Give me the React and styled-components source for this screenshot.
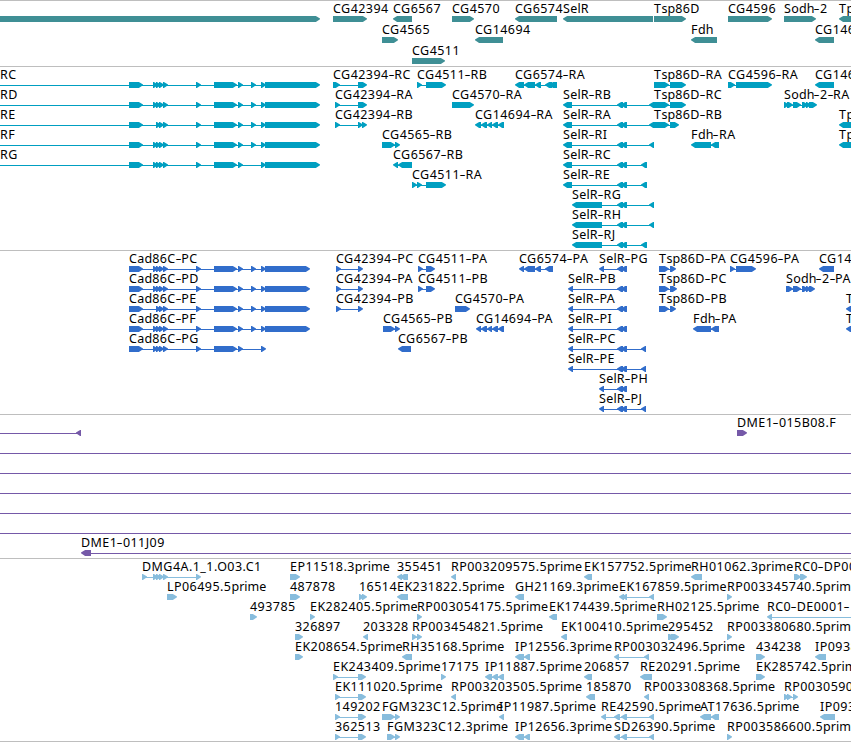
import React from "react";
import styled, { createGlobalStyle } from "styled-components";

const GlobalStyle = createGlobalStyle`
  body {
    margin: 0;
    background: #fff;
    overflow: hidden;
  }
`;

const Browser = styled.main`
  display: flex;
  flex-direction: column;
  width: 851px;
  height: 742px;
  overflow: hidden;
  background: #fff;
  color: #000;
  font-family: "Noto Sans", "DejaVu Sans", sans-serif;
  font-size: 12.5px;
`;

const Track = styled.section`
  display: flex;
  flex-direction: column;
  flex: none;
  box-sizing: border-box;
  height: ${(p) => p.$height}px;
  padding-top: 2px;
  border-top: 1px solid #bebebe;
  border-bottom: ${(p) => (p.$last ? "1px solid #bebebe" : "none")};
  color: ${(p) => p.$color};
`;

const Lane = styled.div`
  position: relative;
  flex: none;
  height: ${(p) => p.$pitch}px;
`;

/* Features sit at their own genomic coordinate within a lane. */
const FeatureBox = styled.div`
  position: absolute;
  top: 0;
  display: flex;
  flex-direction: column;
`;

const Label = styled.span`
  height: 13px;
  line-height: 11px;
  white-space: pre;
  color: #000;
`;

const Run = styled.span`
  letter-spacing: ${(p) => p.$spacing}px;
`;

const Hyphen = styled.span`
  display: inline-block;
  padding: 0 0.9px 0 0.6px;
  transform: scaleX(1.5);
`;

const Glyph = styled.svg`
  display: block;
  height: 6px;
  fill: currentColor;
  overflow: visible;
`;

const HEAD = 5;

function exonPath([a, b], dir, origin) {
  const s = a - origin;
  const e = b - origin;
  const head = Math.min(HEAD, e - s) - 0.9;
  return dir === "+"
    ? `M${s} 0H${e - head}L${e} 2.5V3.3L${e - head} 6H${s}Z`
    : `M${e} 0H${s + head}L${s} 2.5V3.3L${s + head} 6H${e}Z`;
}

/* Digits and capitals are set wider than lowercase. */
const runSpacing = (text) => (/^[a-z]/.test(text) ? 0.03 : 0.45);

const splitRuns = (label) => label.match(/[a-z]+|-|[^a-z-]+/g) ?? [];

function Feature({ label, dir, exons, from, to }) {
  const start = from ?? exons[0][0];
  const end = to ?? exons[exons.length - 1][1];
  return (
    <FeatureBox style={{ left: start }}>
      <Label>
        {splitRuns(label).map((run, i) =>
          run === "-" ? (
            <Hyphen key={i}>-</Hyphen>
          ) : (
            <Run key={i} $spacing={runSpacing(run)}>{run}</Run>
          )
        )}
      </Label>
      <Glyph width={end - start} height="6">
        {(exons.length !== 1 || from !== undefined || to !== undefined) && (
          <rect x={dir === "-" && from === undefined ? 3 : 0} y="3" width={end - start - 3} height="1" />
        )}
        {exons.map((x, i) => (
          <path key={i} d={exonPath(x, dir, start)} />
        ))}
      </Glyph>
    </FeatureBox>
  );
}

const f = (label, dir, spans, range = {}) => ({
  label,
  dir,
  exons: spans ? spans.split(" ").map((s) => s.split("-").map(Number)) : [],
  ...range,
});

const OFF_LEFT = { from: 0 };

const C_HEAD = "129-143 153-158 156-161 159-164 163-168";
const C_HEAD_E = "129-143 156-161 159-164 163-168";
const C_MID = "196-201 214-237 238-243 251-256 261-266";
const C_MID_G = "196-201 214-237 238-243 261-266";
const S_MID = "617-623 621-627";
const CG14694 = "481-487 487-492 492-498 498-504";

const genes = [
  [
    f("", "+", "0-320"),
    f("CG42394", "+", "333-367"),
    f("CG6567", "-", "393-412"),
    f("CG4570", "+", "452-474"),
    f("CG6574", "-", "515-557"),
    f("SelR", "-", "563-653"),
    f("Tsp86D", "+", "654-686"),
    f("CG4596", "+", "728-772"),
    f("Sodh-2", "+", "784-816"),
    f("Tp", "-", "839-860"),
  ],
  [
    f("CG4565", "+", "382-398"),
    f("CG14694", "-", "475-503"),
    f("Fdh", "-", "691-717"),
    f("CG146", "-", "815-834"),
  ],
  [f("CG4511", "+", "412-445")],
];

const transcripts = [
  [
    f("RC", "+", `${C_HEAD} ${C_MID} 265-320`, OFF_LEFT),
    f("CG42394-RC", "+", "333-340 358-367"),
    f("CG4511-RB", "+", "417-422 426-446"),
    f("CG6574-RA", "-", "515-524 524-535 535-541 545-552 549-557"),
    f("Tsp86D-RA", "+", "654-669 670-686"),
    f("CG4596-RA", "+", "728-735 736-772"),
    f("CG146", "-", "815-834"),
  ],
  [
    f("RD", "+", `${C_HEAD} ${C_MID} 265-320`, OFF_LEFT),
    f("CG42394-RA", "+", "335-340 358-367"),
    f("CG4570-RA", "+", "452-474"),
    f("SelR-RB", "-", `563-572 ${S_MID} 649-655`),
    f("Tsp86D-RC", "+", "654-669 670-686"),
    f("Sodh-2-RA", "+", "784-789 787-793 793-801 802-808 806-811 809-817"),
  ],
  [
    f("RE", "+", `${C_HEAD_E} ${C_MID} 265-320`, OFF_LEFT),
    f("CG42394-RB", "+", "335-340 358-363 362-367"),
    f("CG14694-RA", "-", `475-481 ${CG14694}`),
    f("SelR-RA", "-", `563-572 ${S_MID} 649-655`),
    f("Tsp86D-RB", "+", "654-669 670-679"),
    f("Tp", "-", "839-860"),
  ],
  [
    f("RF", "+", `${C_HEAD} ${C_MID} 265-320`, OFF_LEFT),
    f("CG4565-RB", "+", "382-395 395-400"),
    f("SelR-RI", "-", `563-572 ${S_MID} 649-654`),
    f("Fdh-RA", "-", "691-711 711-719"),
    f("Tp", "-", "839-860"),
  ],
  [
    f("RG", "+", `${C_HEAD} ${C_MID_G} 265-320`, OFF_LEFT),
    f("CG6567-RB", "-", "393-398 398-412"),
    f("SelR-RC", "-", `563-572 ${S_MID} 641-647`),
  ],
  [
    f("CG4511-RA", "+", "412-417 417-422 426-446"),
    f("SelR-RE", "-", `563-572 ${S_MID} 641-647`),
  ],
  [f("SelR-RG", "-", `572-602 ${S_MID} 649-654`)],
  [f("SelR-RH", "-", `572-602 ${S_MID} 649-654`)],
  [f("SelR-RJ", "-", `572-602 ${S_MID} 641-647`)],
];

const proteins = [
  [
    f("Cad86C-PC", "+", `${C_HEAD} ${C_MID} 265-310`),
    f("CG42394-PC", "+", "336-341 358-363"),
    f("CG4511-PA", "+", "418-423 426-435"),
    f("CG6574-PA", "-", "519-524 524-535 535-541 545-553"),
    f("SelR-PG", "-", `599-604 ${S_MID}`),
    f("Tsp86D-PA", "+", "659-669 670-676"),
    f("CG4596-PA", "+", "730-735 736-756"),
    f("CG14", "-", "819-834"),
  ],
  [
    f("Cad86C-PD", "+", `${C_HEAD} ${C_MID} 265-310`),
    f("CG42394-PA", "+", "336-341 358-363"),
    f("CG4511-PB", "+", "418-423 426-435"),
    f("SelR-PB", "-", `568-573 ${S_MID}`),
    f("Tsp86D-PC", "+", "659-669 670-677"),
    f("Sodh-2-PA", "+", "786-793 793-801 802-808 806-811 809-815"),
  ],
  [
    f("Cad86C-PE", "+", `${C_HEAD_E} ${C_MID} 265-310`),
    f("CG42394-PB", "+", "336-341 358-363"),
    f("CG4570-PA", "+", "455-470"),
    f("SelR-PA", "-", `568-573 ${S_MID}`),
    f("Tsp86D-PB", "+", "659-669 670-676"),
    f("T", "-", "846-860"),
  ],
  [
    f("Cad86C-PF", "+", `${C_HEAD} ${C_MID} 265-310`),
    f("CG4565-PB", "+", "383-395 395-400"),
    f("CG14694-PA", "-", `476-481 ${CG14694}`),
    f("SelR-PI", "-", `568-573 ${S_MID}`),
    f("Fdh-PA", "-", "693-711 711-719"),
    f("T", "-", "846-860"),
  ],
  [
    f("Cad86C-PG", "+", `${C_HEAD} ${C_MID_G}`),
    f("CG6567-PB", "-", "398-411"),
    f("SelR-PC", "-", `568-573 ${S_MID} 641-646`),
  ],
  [f("SelR-PE", "-", `568-573 ${S_MID} 641-646`)],
  [f("SelR-PH", "-", `599-604 ${S_MID}`)],
  [f("SelR-PJ", "-", `599-604 ${S_MID} 641-646`)],
];

const SPAN = { from: 0, to: 860 };
const insertions = [
  [f("", "-", "76-81", OFF_LEFT), f("DME1-015B08.F", "+", "737-747")],
  [f("", "-", "", SPAN)],
  [f("", "-", "", SPAN)],
  [f("", "-", "", SPAN)],
  [f("", "-", "", SPAN)],
  [f("", "-", "", SPAN)],
  [f("DME1-011J09", "-", "81-91", { to: 860 })],
];

const ests = [
  [
    f("DMG4A.1_1.O03.C1", "+", "142-147 153-158 156-161 159-164 163-168 196-201"),
    f("EP11518.3prime", "+", "290-300"),
    f("355451", "-", "397-402 400-408"),
    f("RP003209575.5prime", "-", "451-456"),
    f("EK157752.5prime", "-", "584-592"),
    f("RH01062.3prime", "-", "691-702"),
    f("RC0-DP00", "+", "794-801 800-807"),
  ],
  [
    f("LP06495.5prime", "+", "167-177"),
    f("487878", "+", "290-300"),
    f("16514", "+", "359-364 362-367"),
    f("EK231822.5prime", "-", "397-408"),
    f("GH21169.3prime", "-", "515-524"),
    f("EK167859.5prime", "-", "619-624 622-627 649-654"),
    f("RP003345740.5prime", "+", "727-732"),
  ],
  [
    f("493785", "+", "250-257"),
    f("EK282405.5prime", "+", "310-315"),
    f("RP003054175.5prime", "+", "417-422"),
    f("EK174439.5prime", "-", "549-557"),
    f("RH02125.5prime", "+", "657-667"),
    f("RC0-DE0001-", "-", "767-772", { to: 860 }),
  ],
  [
    f("326897", "+", "295-303"),
    f("203328", "-", "363-368"),
    f("RP003454821.5prime", "+", "412-417 417-422"),
    f("EK100410.5prime", "-", "561-567"),
    f("295452", "+", "668-674 671-679"),
    f("RP003380680.5prime", "+", "727-732"),
  ],
  [
    f("EK208654.5prime", "+", "295-303"),
    f("RH35168.5prime", "-", "402-412"),
    f("IP12556.3prime", "-", "515-524 524-530"),
    f("RP003032496.5prime", "-", "614-619 644-649"),
    f("434238", "+", "756-765"),
    f("IP0938", "-", "815-826"),
  ],
  [
    f("EK243409.5prime", "+", "333-338 358-366"),
    f("17175", "+", "441-446"),
    f("IP11887.5prime", "-", "485-492 492-498 498-504"),
    f("206857", "-", "584-592"),
    f("RE20291.5prime", "-", "640-652"),
    f("EK285742.5prime", "+", "756-765"),
  ],
  [
    f("EK111020.5prime", "+", "335-340 358-366"),
    f("RP003203505.5prime", "-", "451-456"),
    f("185870", "-", "586-595"),
    f("RP003308368.5prime", "-", "644-649"),
    f("RP0030590", "+", "784-789 787-792 793-798"),
  ],
  [
    f("149202", "+", "335-340 358-366"),
    f("FGM323C12.5prime", "+", "382-395 395-400"),
    f("IP11987.5prime", "-", "499-504"),
    f("RE42590.5prime", "-", "601-606 614-620 621-627 649-654"),
    f("AT17636.5prime", "-", "700-711 711-719"),
    f("IP093", "-", "820-835"),
  ],
  [
    f("362513", "+", "335-340 358-366"),
    f("FGM323C12.3prime", "+", "387-395 395-400"),
    f("IP12656.3prime", "-", "515-524 524-530"),
    f("SD26390.5prime", "-", "614-620 621-627 649-654"),
    f("RP003586600.5prime", "+", "727-732"),
  ],
];

const tracks = [
  { id: "genes", color: "#3f8f95", height: 66, pitch: 21, lanes: genes },
  { id: "transcripts", color: "#009fc1", height: 184, pitch: 20, lanes: transcripts },
  { id: "proteins", color: "#316dcb", height: 164, pitch: 20, lanes: proteins },
  { id: "insertions", color: "#7559a8", height: 144, pitch: 20, lanes: insertions },
  { id: "ests", color: "#88bddd", height: 184, pitch: 20, lanes: ests },
];

export default function App() {
  return (
    <>
      <GlobalStyle />
      <Browser>
        {tracks.map((t, ti) => (
          <Track key={t.id} $height={t.height} $color={t.color} $last={ti === tracks.length - 1}>
            {t.lanes.map((lane, i) => (
              <Lane key={i} $pitch={t.pitch}>
                {lane.map((feature, j) => (
                  <Feature key={j} {...feature} />
                ))}
              </Lane>
            ))}
          </Track>
        ))}
      </Browser>
    </>
  );
}
